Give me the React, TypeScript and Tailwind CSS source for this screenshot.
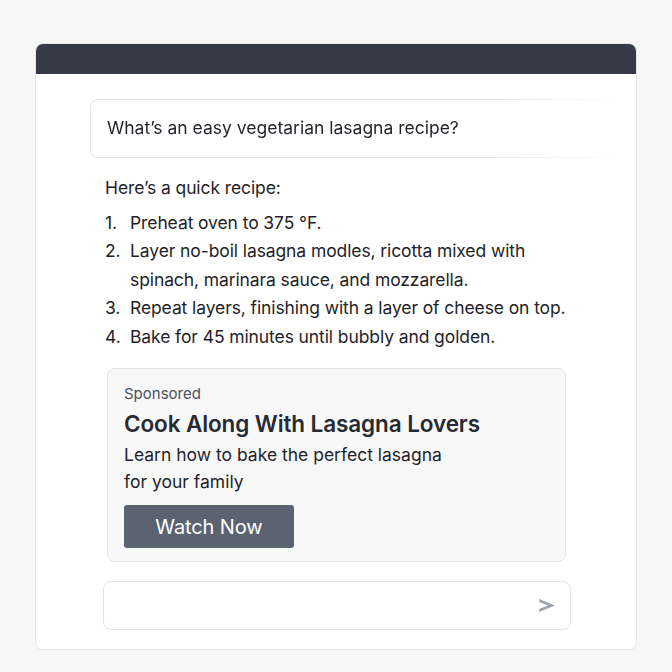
import React from 'react'

const steps = [
  'Preheat oven to 375 °F.',
  'Layer no-boil lasagna modles, ricotta mixed with spinach, marinara sauce, and mozzarella.',
  'Repeat layers, finishing with a layer of cheese on top.',
  'Bake for 45 minutes until bubbly and golden.',
]

function SendIcon() {
  return (
    <svg width="18" height="15" viewBox="0 0 18 15" className="text-[#9ca3af]">
      <path d="M1 1 L17 7.5 L1 14 L1.5 10.8 L10 7.5 L1.5 4.2 Z" fill="currentColor" />
    </svg>
  )
}

export default function App() {
  return (
    <div
      className="min-h-screen bg-[#f7f7f8] pt-[43px] pl-[35px] pb-[22px]"
      style={{ fontFamily: 'Inter, "Noto Sans", sans-serif' }}
    >
      <div className="w-[602px] h-[607px] flex flex-col rounded-lg border border-[#e3e5e8] bg-white overflow-hidden">
        {/* title bar */}
        <div className="h-[30px] bg-[#363a46] shrink-0" />

        <div className="flex-1 flex flex-col pt-[25px]">
          {/* user prompt */}
          <div className="ml-[54px] w-[540px] h-[59px] flex items-center pl-[16px] rounded-l-lg border border-r-0 border-[#e1e4e8] [mask-image:linear-gradient(to_right,black_72%,transparent_98%)]">
            <span className="text-[17.5px] tracking-[0px] text-[#1f2328]">What’s an easy vegetarian lasagna recipe?</span>
          </div>

          {/* answer */}
          <div className="ml-[69px] mt-[16px] text-[17.5px] tracking-[-0.1px] text-[#1f2328] leading-[28.5px]">
            <p>Here’s a quick recipe:</p>
            <ol className="mt-[6px]">
              {steps.map((s, i) => (
                <li key={i} className="flex">
                  <span className="w-[25px] shrink-0">{i + 1}.</span>
                  <span className="w-[440px]">{s}</span>
                </li>
              ))}
            </ol>
          </div>

          {/* sponsored card */}
          <div className="ml-[71px] mt-[17px] w-[459px] h-[194px] rounded-lg border border-[#e3e5e8] bg-[#f8f8f9] pt-[14px] pl-[16px]">
            <p className="text-[15px] leading-[22px] text-[#4b5160]">Sponsored</p>
            <p className="mt-[5px] text-[22.5px] leading-[28px] font-semibold tracking-[-0.1px] text-[#262a33]">
              Cook Along With Lasagna Lovers
            </p>
            <p className="mt-[3px] text-[17.5px] leading-[27px] text-[#1f2328]">
              Learn how to bake the perfect lasagna
              <br />
              for your family
            </p>
            <button className="mt-[10px] w-[170px] h-[43px] rounded-[3px] bg-[#5b6371] text-white text-[20px] tracking-[-0.1px]">
              Watch Now
            </button>
          </div>

          {/* input */}
          <div className="ml-[67px] mt-[19px] w-[468px] h-[49px] rounded-lg border border-[#e1e4e8] bg-white flex items-center justify-end pr-[14px]">
            <SendIcon />
          </div>
        </div>
      </div>
    </div>
  )
}
